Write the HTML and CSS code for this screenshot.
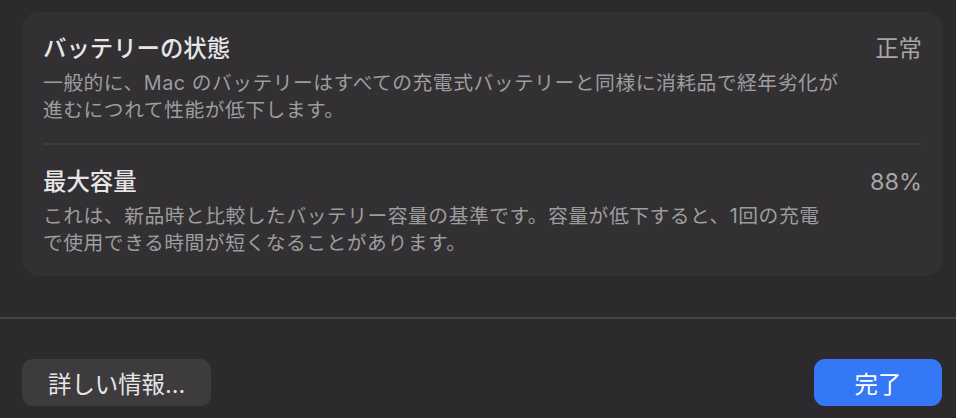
FILE: index.html
```html
<!DOCTYPE html>
<html lang="ja">
  <head>
    <meta charset="UTF-8" />
    <meta name="viewport" content="width=device-width, initial-scale=1.0" />
    <title>バッテリーの状態</title>

    <link rel="stylesheet" href="styles.css">
  </head>
  <body>
    <div class="sheet">
      <!-- Battery info card -->
      <div class="card">
        <div class="row">
          <div class="row-head">
            <h2>バッテリーの状態</h2>
            <span class="value">正常</span>
          </div>
          <p>一般的に、Mac のバッテリーはすべての充電式バッテリーと同様に消耗品で経年劣化が<br>進むにつれて性能が低下します。</p>
        </div>
        <div class="row">
          <div class="row-head">
            <h2>最大容量</h2>
            <span class="value">88%</span>
          </div>
          <p>これは、新品時と比較したバッテリー容量の基準です。容量が低下すると、1回の充電<br>で使用できる時間が短くなることがあります。</p>
        </div>
      </div>
    </div>

    <!-- Footer buttons -->
    <div class="actions">
      <button class="btn">詳しい情報...</button>
      <button class="btn btn-primary">完了</button>
    </div>
  </body>
</html>
```

FILE: styles.css
```css
/* General Styling */
body {
  margin: 0;
  background: #2c2a2c;
  color: #e4e4e4;
  font-family: Inter, "Noto Sans CJK JP", sans-serif;
}

.sheet {
  padding: 12px 14px 41px 22px;
}

/* Card */
.card {
  background: #323033;
  border-radius: 16px;
  padding: 0 20px 0 21px;
}

.row {
  padding: 23px 0 19px;
}

.row + .row {
  border-top: 2px solid #3e3c3f;
}

.row-head {
  display: flex;
  justify-content: space-between;
  align-items: baseline;
}

.row h2 {
  margin: 0;
  font-size: 23.4px;
  line-height: 28px;
  font-weight: 500;
  color: #e6e6e6;
}

.row .value {
  font-size: 23.4px;
  line-height: 28px;
  color: #a6a6a6;
}

.row p {
  margin: 7px 0 0;
  font-size: 19.8px;
  line-height: 27px;
  letter-spacing: 0.5px;
  color: #9d9d9d;
}

/* Footer */
.actions {
  display: flex;
  justify-content: space-between;
  border-top: 2px solid #464446;
  padding: 40px 14px 0 22px;
}

.btn {
  height: 47px;
  padding: 0 26px;
  border: none;
  border-radius: 11px;
  background: #3d3b3e;
  color: #e6e6e6;
  font-family: inherit;
  font-size: 23.4px;
  cursor: pointer;
}

.btn-primary {
  min-width: 128px;
  background: #3478f6;
  color: #ffffff;
}
```
